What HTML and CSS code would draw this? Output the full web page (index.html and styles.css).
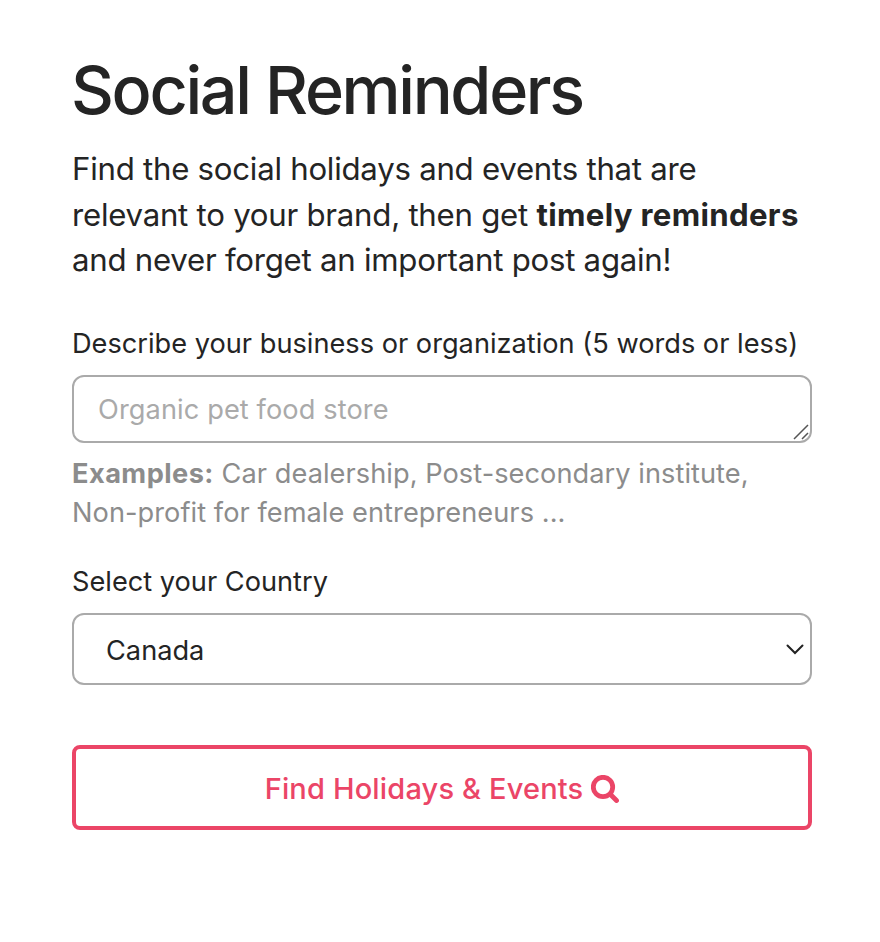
FILE: index.html
```html
<!DOCTYPE html>
<html lang="en">
<head>
<meta charset="utf-8">
<title>Social Reminders</title>
<link rel="stylesheet" href="styles.css">
</head>
<body>
<main class="page">
  <h1 class="title">Social Reminders</h1>
  <p class="lead">Find the social holidays and events that are<br>relevant to your brand, then get <strong>timely reminders</strong><br>and never forget an important post again!</p>
  <form class="form">
    <label class="label" for="business">Describe your business or organization (5 words or less)</label>
    <div class="field">
      <textarea class="control" id="business" rows="1" placeholder="Organic pet food store"></textarea>
      <svg class="grip" viewBox="0 0 16 16"><path d="M1 15 15 1M9 15l6-6"/></svg>
    </div>
    <p class="help"><strong>Examples:</strong> Car dealership, Post-secondary institute,<br>Non-profit for female entrepreneurs ...</p>
    <label class="label country" for="country">Select your Country</label>
    <div class="field">
      <select class="select" id="country"><option>Canada</option></select>
      <svg class="chevron" viewBox="0 0 18 11"><path d="m1.500 1.500 7.500 7.500 7.500-7.500"/></svg>
    </div>
    <button class="button" type="button"><span>Find Holidays &amp; Events</span>
      <svg class="search" viewBox="0 0 28 28"><circle cx="12" cy="12" r="9.700"/><path d="m19.500 19.500 6 6"/></svg>
    </button>
  </form>
</main>
</body>
</html>
```
FILE: styles.css
```css
* { box-sizing: border-box; }
body { margin: 0; background: #fff; color: #242424; font-family: Inter, "Liberation Sans", sans-serif; }
.page { width: 740px; margin: 0 0 0 72px; padding-top: 48px; }
.title { margin: 0 0 0 -1px; font-size: 66.5px; line-height: 84px; font-weight: 500; letter-spacing: -2.35px; white-space: nowrap; }
.lead { margin: 15px 0 0; font-size: 31.2px; line-height: 45.5px; letter-spacing: -0.25px; white-space: nowrap; }
.lead strong { letter-spacing: 0.32px; }
.label { display: block; margin-top: 40px; height: 40px; font-size: 27.2px; line-height: 40px; white-space: nowrap; }
.field { position: relative; display: flex; margin-top: 11px; }
.control { width: 100%; height: 68px; padding: 14px 24px 12px; border: 2px solid #aaa; border-radius: 12px; font: 27.2px/38px Inter, sans-serif; letter-spacing: 0.1px; resize: none; overflow: hidden; }
.control::placeholder { color: #aaa; opacity: 1; }
.grip { position: absolute; right: 3px; bottom: 3px; width: 16px; height: 16px; fill: none; stroke: #555; stroke-width: 1.5; }
.help { margin: 11px 0 0; color: #8c8c8c; font-size: 27.2px; line-height: 39px; letter-spacing: 0.05px; white-space: nowrap; }
.help strong { letter-spacing: 0.45px; }
.label.country { margin-top: 30px; }
.select { appearance: none; width: 100%; height: 72px; padding: 3px 32px 0; border: 2px solid #aaa; border-radius: 12px; background: #fff; color: #242424; font: 27.2px Inter, sans-serif; }
.chevron { position: absolute; right: 8px; top: 31px; width: 18px; height: 11px; fill: none; stroke: #222; stroke-width: 2; stroke-linecap: round; stroke-linejoin: miter; }
.button { display: flex; align-items: center; justify-content: center; gap: 8px; width: 100%; height: 85px; margin-top: 60px; padding: 2px 0 0; border: 4px solid #eb4567; border-radius: 8px; background: #fff; color: #eb4567; font: 500 29px Inter, sans-serif; letter-spacing: 0.16px; white-space: nowrap; }
.search { width: 28px; height: 28px; margin-top: 2px; fill: none; stroke: currentColor; stroke-width: 4.8; stroke-linecap: round; }
```
